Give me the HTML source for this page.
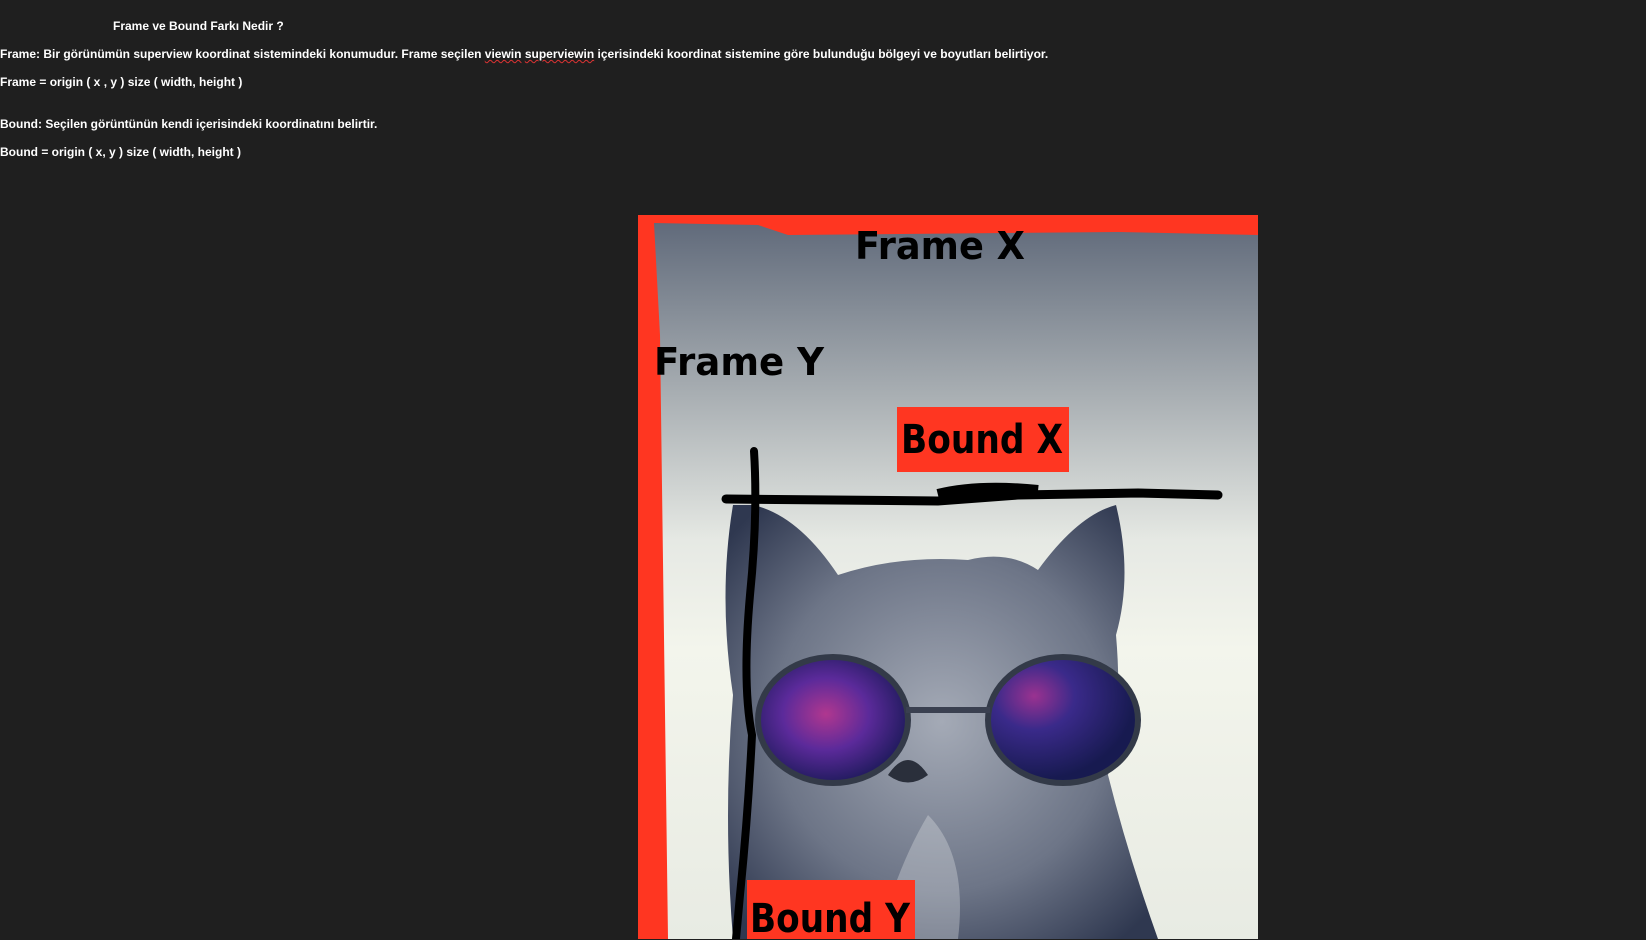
<!DOCTYPE html>
<html><head><meta charset="utf-8"><style>
html,body{margin:0;padding:0;background:#1f1f1f;width:1646px;height:940px;overflow:hidden;position:relative}
.t{position:absolute;left:0;color:#fff;font:bold 12px "Liberation Sans",sans-serif;white-space:nowrap;letter-spacing:0}
.u{text-decoration:underline wavy #d33;text-decoration-thickness:1px}
svg{position:absolute;left:638px;top:215px}
</style></head><body>
<div class="t" style="left:113px;top:19px">Frame ve Bound Farkı Nedir ?</div>
<div class="t" style="top:47px">Frame: Bir görünümün superview koordinat sistemindeki konumudur. Frame seçilen <span class="u">viewin</span> <span class="u">superviewin</span> içerisindeki koordinat sistemine göre bulunduğu bölgeyi ve boyutları belirtiyor.</div>
<div class="t" style="top:75px">Frame = origin ( x , y ) size ( width, height )</div>
<div class="t" style="top:117px">Bound: Seçilen görüntünün kendi içerisindeki koordinatını belirtir.</div>
<div class="t" style="top:145px">Bound = origin ( x, y ) size ( width, height )</div>
<svg width="620" height="724" viewBox="0 0 620 724">
<defs>
<linearGradient id="bg" x1="0" y1="0" x2="0" y2="1">
<stop offset="0" stop-color="#5d6778"/><stop offset="0.25" stop-color="#a9afb3"/><stop offset="0.45" stop-color="#e6e9e4"/><stop offset="0.6" stop-color="#f3f5ec"/><stop offset="1" stop-color="#e8ebe3"/></linearGradient>
<radialGradient id="cat" cx="0.5" cy="0.5" r="0.65"><stop offset="0" stop-color="#a4aab6"/><stop offset="0.6" stop-color="#6d7587"/><stop offset="1" stop-color="#2f3850"/></radialGradient>
<radialGradient id="gl" cx="0.45" cy="0.45" r="0.6"><stop offset="0" stop-color="#b0378f"/><stop offset="0.5" stop-color="#5b2a9a"/><stop offset="1" stop-color="#1d1a5a"/></radialGradient>
<radialGradient id="gr" cx="0.3" cy="0.3" r="0.7"><stop offset="0" stop-color="#9a3290"/><stop offset="0.4" stop-color="#3a2a8a"/><stop offset="1" stop-color="#171a50"/></radialGradient>
</defs>
<rect width="620" height="724" fill="url(#bg)"/>
<path d="M95 724 Q85 600 95 480 Q80 380 95 290 L115 290 Q160 300 200 360 Q260 340 330 345 Q370 335 400 355 Q440 300 478 290 Q495 360 478 420 Q485 500 470 560 Q490 640 520 724 Z" fill="url(#cat)"/>
<path d="M290 600 Q330 640 320 724 L240 724 Q260 650 290 600Z" fill="#dfe2e6" opacity=".35"/>
<ellipse cx="195" cy="505" rx="78" ry="66" fill="#333a48"/>
<ellipse cx="195" cy="505" rx="72" ry="60" fill="url(#gl)"/>
<ellipse cx="425" cy="505" rx="78" ry="66" fill="#333a48"/>
<ellipse cx="425" cy="505" rx="72" ry="60" fill="url(#gr)"/>
<rect x="268" y="492" width="84" height="6" fill="#3a4050"/>
<path d="M250 560 Q270 530 290 560 Q270 575 250 560Z" fill="#2a2f3b"/>
<path d="M0 0 H620 V20 L480 17 L150 20 L120 10 L16 8 L22 120 L30 724 H0Z" fill="#ff3621"/>
<text x="217" y="44" font-family="DejaVu Sans,sans-serif" font-weight="bold" font-size="38" fill="#000" textLength="170" lengthAdjust="spacingAndGlyphs">Frame X</text>
<text x="16" y="160" font-family="DejaVu Sans,sans-serif" font-weight="bold" font-size="38" fill="#000" textLength="170" lengthAdjust="spacingAndGlyphs">Frame Y</text>
<rect x="259" y="192" width="172" height="65" fill="#ff3621"/>
<text x="263" y="238" font-family="DejaVu Sans,sans-serif" font-weight="bold" font-size="40" fill="#000" textLength="162" lengthAdjust="spacingAndGlyphs">Bound X</text>
<path d="M88 284 L300 286 L380 280 L500 278 L580 280" stroke="#000" stroke-width="9" fill="none" stroke-linecap="round"/>
<path d="M300 280 Q340 270 400 276" stroke="#000" stroke-width="12" fill="none"/>
<path d="M116 236 Q120 300 112 380 Q104 470 114 520 Q110 600 102 680 L98 724" stroke="#000" stroke-width="8" fill="none" stroke-linecap="round"/>
<rect x="109" y="665" width="168" height="60" fill="#ff3621"/>
<text x="112" y="717" font-family="DejaVu Sans,sans-serif" font-weight="bold" font-size="40" fill="#000" textLength="160" lengthAdjust="spacingAndGlyphs">Bound Y</text>
</svg>
</body></html>
